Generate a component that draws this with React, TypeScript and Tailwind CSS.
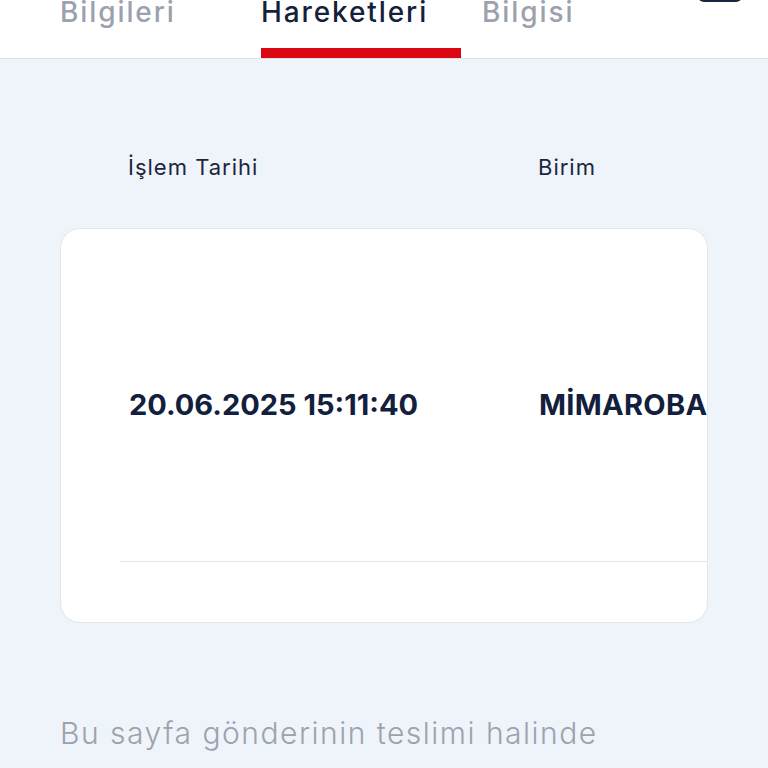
export default function App() {
  const tabs = [
    { label: 'Bilgileri', active: false, w: 'w-[201px]' },
    { label: 'Hareketleri', active: true, w: 'w-[221px]' },
    { label: 'Bilgisi', active: false, w: 'w-[200px]' },
  ];

  return (
    <div className="w-[768px] h-[768px] overflow-hidden bg-[#eff3fa] font-['Inter',sans-serif]">
      {/* Tabs header */}
      <div className="relative h-[59px] bg-white border-b border-[#dde1e8] overflow-hidden">
        <div className="flex pl-[60px] -mt-[8px]">
          {tabs.map((t) => (
            <div key={t.label} className={`${t.w} flex flex-col`}>
              <span
                className={`text-[28px] leading-[40px] font-medium tracking-[1.9px] ${
                  t.active ? 'text-[#14213d]' : 'text-[#9ba1ad]'
                }`}
              >
                {t.label}
              </span>
              <div className={`mt-[16px] h-[10px] w-[200px] ${t.active ? 'bg-[#dc0613]' : ''}`} />
            </div>
          ))}
        </div>
        <div className="absolute right-[26px] top-[-10px] w-[44px] h-[12px] rounded-b-[6px] bg-[#1c2540]" />
      </div>

      <div className="px-[60px]">
        {/* Column headers */}
        <div className="flex pt-[92px] pl-[68px] text-[22px] leading-[32px] text-[#1b2640] tracking-[1px]">
          <div className="w-[410px]">İşlem Tarihi</div>
          <div>Birim</div>
        </div>

        {/* Card */}
        <div className="mt-[45px] h-[395px] bg-white rounded-[20px] border-[1.5px] border-[#e2e5ea] overflow-hidden">
          <div className="ml-[59px] h-[333px] border-b-[1.5px] border-[#e3e5ea] flex items-center pt-[20px] pl-[9px] whitespace-nowrap">
            <div className="w-[410px] shrink-0 text-[29px] font-bold text-[#12203d] tracking-[0px]">20.06.2025 15:11:40</div>
            <div className="shrink-0 text-[29px] font-bold text-[#12203d] tracking-[0.3px]">MİMAROBA ŞUBE</div>
          </div>
        </div>

        {/* Footer text */}
        <div className="mt-[90px] text-[30px] leading-[40px] font-light text-[#9ca2ae] whitespace-nowrap tracking-[1.5px]">
          Bu sayfa gönderinin teslimi halinde
        </div>
      </div>
    </div>
  );
}
